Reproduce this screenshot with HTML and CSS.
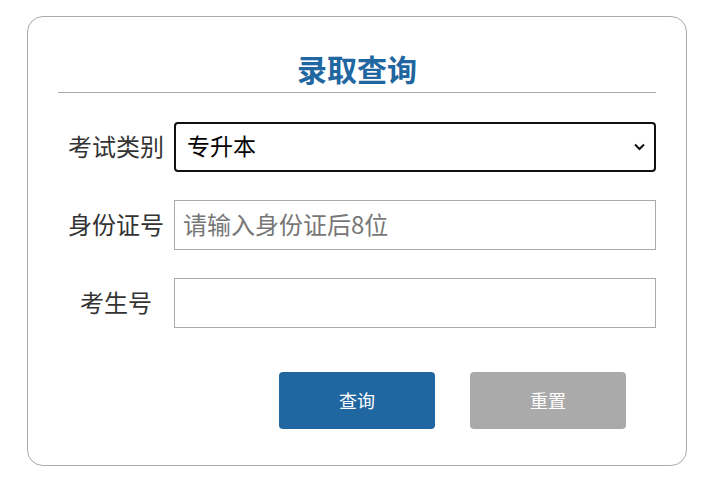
FILE: index.html
```html
<!DOCTYPE html>
<html lang="zh">
<head>
<meta charset="utf-8">
<title>录取查询</title>
<link rel="stylesheet" href="styles.css">
</head>
<body>
<div class="card">
  <h1 class="title">录取查询</h1>
  <form class="form">
    <div class="row">
      <label class="label">考试类别</label>
      <select class="field select">
        <option>专升本</option>
      </select>
    </div>
    <div class="row">
      <label class="label">身份证号</label>
      <input class="field input" type="text" placeholder="请输入身份证后8位">
    </div>
    <div class="row">
      <label class="label">考生号</label>
      <input class="field input" type="text">
    </div>
    <div class="actions">
      <button type="button" class="btn btn-primary">查询</button>
      <button type="button" class="btn btn-reset">重置</button>
    </div>
  </form>
</div>
</body>
</html>
```

FILE: styles.css
```css
* { box-sizing: border-box; }
html, body { margin: 0; padding: 0; background: #fff; }
body {
  font-family: "Noto Sans CJK SC", "Noto Sans", sans-serif;
  color: #333;
}
.card {
  width: 660px;
  height: 450px;
  margin: 16px 0 0 27px;
  border: 1px solid #aaa;
  border-radius: 16px;
  padding: 0 30px;
}
.title {
  margin: 0;
  padding: 31px 0 4px;
  line-height: 40px;
  font-size: 30px;
  font-weight: 700;
  color: #2066a0;
  text-align: center;
  border-bottom: 1px solid #aaa;
}
.form {
  display: flex;
  flex-direction: column;
  gap: 28px;
  padding-top: 29px;
}
.row {
  display: flex;
  align-items: center;
  height: 50px;
}
.label {
  width: 116px;
  padding-bottom: 2px;
  text-align: center;
  font-size: 24px;
  line-height: 30px;
  color: #333;
}
.field {
  flex: 1;
  height: 50px;
  font-family: inherit;
  font-size: 23px;
  color: #000;
}
.select {
  appearance: none;
  -webkit-appearance: none;
  border: 2px solid #111;
  border-radius: 4px;
  padding: 0 30px 4px 11px;
  background-color: #fff;
  background-image: url("data:image/svg+xml,%3Csvg xmlns='http://www.w3.org/2000/svg' width='11' height='8' viewBox='0 0 11 8'%3E%3Cpath d='M1 1.5l4.5 4.5 4.5-4.5' fill='none' stroke='%23111' stroke-width='2'/%3E%3C/svg%3E");
  background-repeat: no-repeat;
  background-position: right 9px center;
  background-size: 11px 8px;
}
.input {
  border: 1px solid #aaa;
  border-radius: 0;
  padding: 0 8px 4px;
  outline: none;
  font-size: 24px;
}
.input::placeholder { color: #777; }
.actions {
  display: flex;
  gap: 35px;
  padding-left: 221px;
  margin-top: 16px;
}
.btn {
  width: 156px;
  height: 57px;
  border: none;
  border-radius: 4px;
  color: #fff;
  font-family: inherit;
  font-size: 18px;
  padding-bottom: 2px;
}
.btn-primary { background: #2066a0; }
.btn-reset { background: #aaa; }
```
